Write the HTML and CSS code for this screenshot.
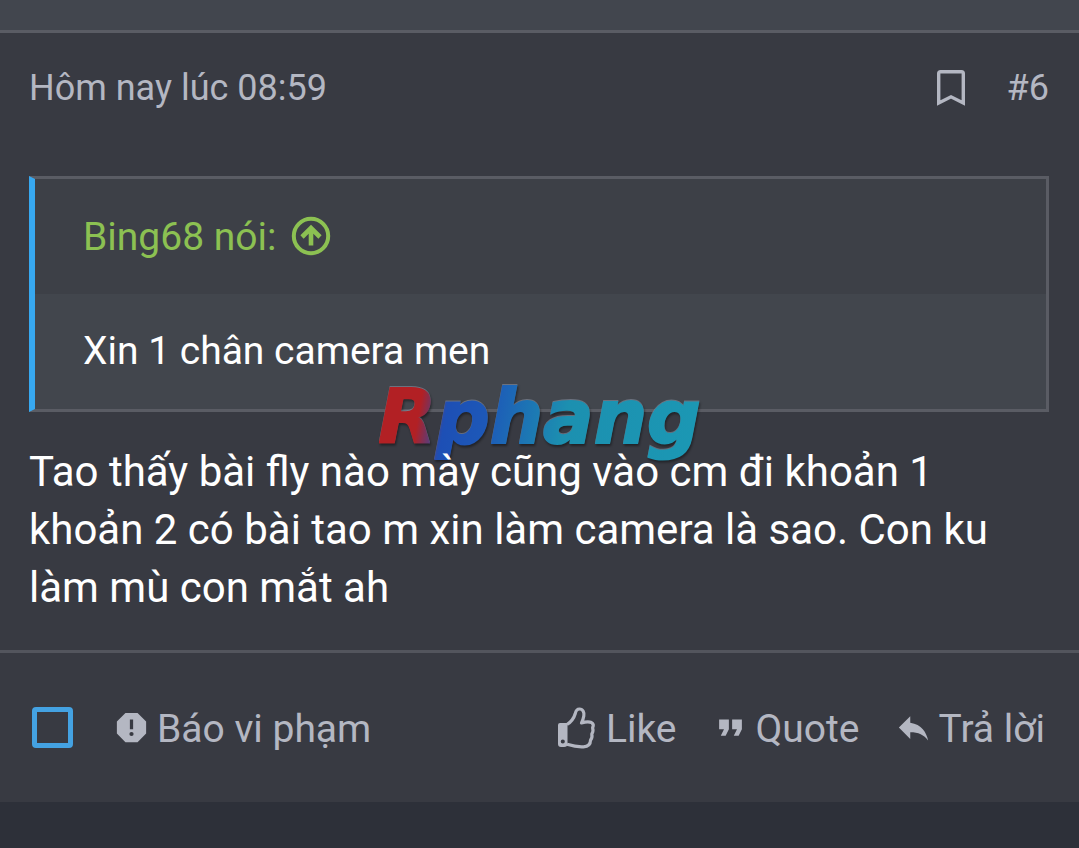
FILE: index.html
```html
<!DOCTYPE html>
<html lang="vi">
<head>
    <meta charset="UTF-8">
    <meta name="viewport" content="width=device-width, initial-scale=1.0">
    <title>Bài viết #6</title>
    <link rel="stylesheet" href="styles.css">
</head>
<body>

    <article class="post">
        <div class="post-user"></div>

        <header class="post-header">
            <time class="post-date">Hôm nay lúc 08:59</time>
            <div class="post-links">
                <a href="#bookmark" aria-label="Đánh dấu">
                    <svg class="icon-bookmark" viewBox="0 0 28 36">
                        <path d="M1.7 3.5Q1.7 1.7 3.5 1.7H24.5Q26.3 1.7 26.3 3.5V33L14 26.8L1.7 33Z" fill="none" stroke="currentColor" stroke-width="3.4"/>
                    </svg>
                </a>
                <a href="#post-6">#6</a>
            </div>
        </header>

        <div class="post-content">
            <blockquote class="quote">
                <div class="quote-title">
                    <a href="#post-1">Bing68 nói:
                        <svg class="icon-up" viewBox="0 0 40 40">
                            <circle cx="20" cy="20" r="17.2" fill="none" stroke="currentColor" stroke-width="4"/>
                            <path d="M20 29.5V13M11 21L20 12L29 21" fill="none" stroke="currentColor" stroke-width="4.6"/>
                        </svg>
                    </a>
                </div>
                <div class="quote-content">Xin 1 chân camera men</div>
            </blockquote>
            <div class="watermark">Rphang</div>
            <p class="message">Tao thấy bài fly nào mày cũng vào cm đi khoản 1 khoản 2 có bài tao m xin làm camera là sao. Con ku làm mù con mắt ah</p>
        </div>

        <footer class="post-footer">
            <div class="actions">
                <input type="checkbox" class="select-post" aria-label="Chọn bài viết">
                <a href="#report" class="action report">
                    <svg class="icon" viewBox="0 0 24 24">
                        <path d="M13 13H11V7H13M12 17.3A1.3 1.3 0 1 1 12 14.7A1.3 1.3 0 0 1 12 17.3M15.73 3H8.27L3 8.27V15.73L8.27 21H15.73L21 15.73V8.27Z" fill="currentColor" fill-rule="evenodd"/>
                    </svg>
                    Báo vi phạm
                </a>
            </div>
            <div class="actions actions-right">
                <button type="button" class="action">
                    <svg class="icon-like" viewBox="0 0 44 42">
                        <path d="M4 16H11.5V36.5Q11.5 40 8 40H5Q2 40 2 37V18Q2 16 4 16ZM6.8 32.5A2 2 0 1 0 6.8 36.6A2 2 0 1 0 6.8 32.5Z" fill="currentColor" fill-rule="evenodd"/>
                        <path d="M11 17.5C15 15 18 11 19.3 6.5C19.8 4 21 2 23.5 2C27 2 28.5 5.5 27.8 9C27.3 11.8 26.5 14 25.5 16C29 15 33 14.6 35.5 15.6C38 16.8 37.5 19 36.6 21C37.4 23 37 25 35.8 27C36.4 29.5 35.8 31.5 34.5 33.3C34.5 37.5 31.5 39.6 27.5 39.8C21 40.2 16.5 39 11 37.3" fill="none" stroke="currentColor" stroke-width="3.2" stroke-linejoin="round"/>
                    </svg>
                    Like
                </button>
                <button type="button" class="action">
                    <svg class="icon" viewBox="0 0 24 24">
                        <path d="M14 17H17L19 13V7H13V13H16M6 17H9L11 13V7H5V13H8Z" fill="currentColor"/>
                    </svg>
                    Quote
                </button>
                <button type="button" class="action">
                    <svg class="icon" viewBox="0 0 24 24">
                        <path d="M10 9V5L3 12L10 19V14.9C15 14.9 18.5 16.5 21 20C20 15 17 10 10 9Z" fill="currentColor"/>
                    </svg>
                    Trả lời
                </button>
            </div>
        </footer>
    </article>

</body>
</html>
```

FILE: styles.css
```css
* {
    box-sizing: border-box;
}

body {
    margin: 0;
    font-family: Roboto, sans-serif;
    background-color: #2d3039;
    color: #fff;
}

a {
    color: inherit;
    text-decoration: none;
}

svg {
    display: block;
    flex: none;
}

.post {
    background-color: #383a42;
    box-shadow: 0 3px 8px rgba(0, 0, 0, 0.5);
}

.post-user {
    height: 33px;
    background-color: #42464e;
    border-bottom: 3px solid #5a5c64;
}

.post-header {
    display: flex;
    justify-content: space-between;
    padding: 30px 30px 30px 29px;
    font-size: 36px;
    line-height: 50px;
    color: #b4b7c2;
}

.post-links {
    display: flex;
    align-items: center;
    gap: 42px;
}

.icon-bookmark {
    width: 28px;
    height: 36px;
}

.post-content {
    position: relative;
    padding: 33px 30px 33px 29px;
}

.quote {
    margin: 0;
    border: 3px solid #5a5c64;
    border-left: 6px solid #37a8f0;
    font-size: 39px;
    line-height: 55px;
}

.quote-title {
    padding: 31px 48px 29px;
    background-color: #3d4047;
    color: #8cc152;
}

.quote-title a {
    display: flex;
    align-items: center;
    gap: 15px;
}

.icon-up {
    width: 40px;
    height: 40px;
    margin-bottom: 4px;
}

.quote-content {
    padding: 30px 48px;
    background-color: #42464d;
}

/* logo laid over the lower edge of the quote */
.watermark {
    position: absolute;
    top: 229px;
    left: 50%;
    transform: translateX(-50%);
    font: italic bold 75px/90px "DejaVu Sans", sans-serif;
    color: transparent;
    background: linear-gradient(100deg, #b22024 14%, #1d4fb5 22%, #1d58b8 34%, #1c90b0 58%, #1b98b4);
    -webkit-background-clip: text;
    background-clip: text;
    -webkit-text-stroke: 2px transparent;
    filter: drop-shadow(0 -1px 0 rgba(150, 160, 180, 0.5)) drop-shadow(1px 2px 1px rgba(0, 0, 0, 0.4));
}

.message {
    position: relative;
    margin: 31px 0 0;
    font-size: 42px;
    line-height: 58px;
}

.post-footer {
    display: flex;
    justify-content: space-between;
    padding: 45px 34px 45px 32px;
    border-top: 3px solid #53555d;
    font-size: 39px;
    line-height: 55px;
    color: #b4b7c2;
}

.actions {
    display: flex;
    align-items: center;
}

.actions-right {
    gap: 34px;
}

.select-post {
    appearance: none;
    width: 41px;
    height: 41px;
    margin: 0;
    border: 5px solid #44a2e2;
    border-radius: 4px;
}

.action {
    display: flex;
    align-items: center;
    gap: 6px;
    padding: 4px 0 0;
    border: none;
    background: none;
    font: inherit;
    color: inherit;
    cursor: pointer;
}

.report {
    margin-left: 39px;
}

.icon {
    width: 39px;
    height: 39px;
    margin-bottom: 4px;
}

.icon-like {
    width: 44px;
    height: 42px;
    margin-bottom: 4px;
}
```
